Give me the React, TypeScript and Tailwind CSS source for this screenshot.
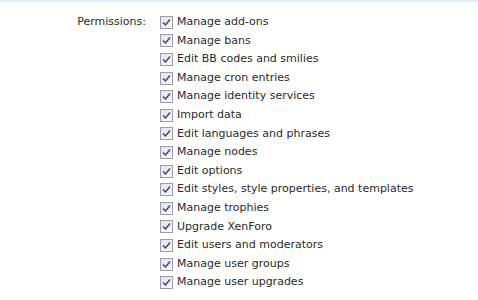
const items = [
  "Manage add-ons",
  "Manage bans",
  "Edit BB codes and smilies",
  "Manage cron entries",
  "Manage identity services",
  "Import data",
  "Edit languages and phrases",
  "Manage nodes",
  "Edit options",
  "Edit styles, style properties, and templates",
  "Manage trophies",
  "Upgrade XenForo",
  "Edit users and moderators",
  "Manage user groups",
  "Manage user upgrades",
];

function Check() {
  return (
    <span className="mr-[4px] inline-flex h-[13px] w-[13px] shrink-0 items-center justify-center border border-[#9a9ea6] bg-gradient-to-br from-[#e2e3e6] to-[#fbfbfb]">
      <svg width="9" height="9" viewBox="0 0 9 9">
        <path d="M1 4.5 L3.5 7 L8 1.5" fill="none" stroke="#33449a" strokeWidth="1.5" />
      </svg>
    </span>
  );
}

export default function App() {
  return (
    <div className="h-[300px] w-[478px] overflow-hidden bg-white font-['DejaVu_Sans',sans-serif] text-[11px] text-[#2a2a2a]">
      <div className="h-[2px] bg-[#e3eef8]" />
      <div className="flex pt-[11px]">
        <div className="w-[146px] pt-[1px] text-right">Permissions:</div>
        <ul className="flex flex-col">
          {items.map((t) => (
            <li key={t} className="flex h-[18.6px] items-center pl-[14px]">
              <Check />
              <span>{t}</span>
            </li>
          ))}
        </ul>
      </div>
    </div>
  );
}
